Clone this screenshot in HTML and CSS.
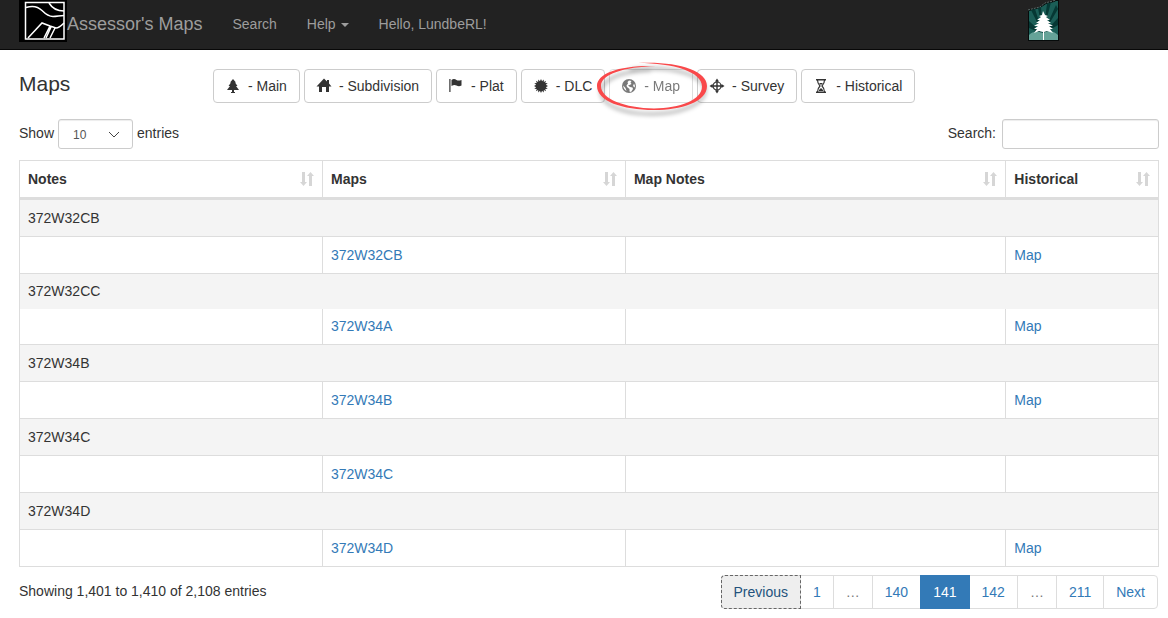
FILE: index.html
```html
<!DOCTYPE html>
<html lang="en">
<head>
    <meta charset="UTF-8">
    <meta name="viewport" content="width=device-width, initial-scale=1.0">
    <title>Assessor's Maps</title>
    <link rel="stylesheet" href="styles.css">
</head>
<body>
    <!-- shared icon for the sortable column headers -->
    <svg class="symbols" aria-hidden="true">
        <symbol id="icon-sort" viewBox="0 0 14 14">
            <path d="M2 0h3v10h2L3.500 14 0 10h2zM9 14V4H7l3.500-4L14 4h-2v10z"/>
        </symbol>
    </svg>

    <nav class="navbar">
        <a class="navbar-brand" href="#">
            <svg class="brand-logo" viewBox="0 0 48 42" aria-hidden="true">
                <rect width="48" height="42" fill="#000"/>
                <g fill="none" stroke="#fff" stroke-width="1.500">
                    <rect x="6.500" y="2.500" width="38.500" height="36.500"/>
                    <path d="M7 7.500c6-2 11-2 16 3 4 4 7 6 11 6 4 0 7-1 11-1"/>
                    <path d="M30 3c3 5 8 8 15 8"/>
                    <path d="M9 38l14-15 8 3 6 2c3 0 5-2 8-5M31 26l-6 12M32 27l-5 11M36 28l-5 10"/>
                </g>
            </svg>
            <span>Assessor's Maps</span>
        </a>
        <ul class="navbar-nav">
            <li><a href="#">Search</a></li>
            <li><a href="#">Help <span class="caret"></span></a></li>
            <li><a href="#">Hello, LundbeRL!</a></li>
        </ul>
        <svg class="tree-logo" viewBox="0 0 31 41" aria-hidden="true">
            <path d="M0 10l12-3 5-4 8-2 3-1h3v41H0z" fill="#060b0b"/>
            <path d="M1 11l11-3 6-4 8-2 2-1h2v39H1z" fill="#1b5e57"/>
            <g fill="#063834">
                <path d="M15 34L3 10l4-1zM15 34L10 8l3-1zM15 34L19 4l4-2zM15 34L28 5l2 4zM15 34L1 21v7zM15 34l15-16v7z"/>
            </g>
            <path d="M1 35c4-4 8-4 14-2 6-3 11-2 15 2v5H1z" fill="#65a398"/>
            <path d="M0 10l12-3 5-4 8-2 3-1" fill="none" stroke="#8aa39f" stroke-width=".6" stroke-dasharray="2 1"/>
            <path d="M15 11l2 4 3 1-2 1 4 3-3 0 4 3-3 0 5 3-4 0 4 3-3 0 3 4-6-2-3 1v8h-1v-8l-4-1-5 2 3-4-3 0 4-3-4 0 5-3-3 0 4-3-3 0 4-3-2-1 3-1z" fill="#fff"/>
        </svg>
    </nav>

    <main class="container">
        <div class="toolbar">
            <h1>Maps</h1>
            <div class="map-types">
                <button type="button" class="btn">
                    <svg class="icon" viewBox="0 0 14 14" aria-hidden="true"><path d="M7 0l3 3.500H9L11.500 7H10l3 4H8v2h1v1H5v-1h1v-2H1l3-4H2.500L5 3.500H4z"/></svg>
                    - Main
                </button>
                <button type="button" class="btn">
                    <svg class="icon" viewBox="0 0 14 14" aria-hidden="true"><path d="M7-.5l3 3V1h2v3.500L14.500 7.500H12V13H9V8H5v5H2V7.500H-.5z"/></svg>
                    - Subdivision
                </button>
                <button type="button" class="btn">
                    <svg class="icon" viewBox="0 0 14 14" aria-hidden="true"><path d="M.3 0h1.200v13H.3zM2.500 1c2-1.500 3.500-1 5 0s3 .6 5 0v5.500c-2 1-3.500.8-5 0s-3-.8-5 .5z"/></svg>
                    - Plat
                </button>
                <button type="button" class="btn">
                    <svg class="icon" viewBox="0 0 14 14" aria-hidden="true"><path d="M7 0l1.100 2.200L9.700.5l.2 2.400 2.200-1.100-.9 2.300 2.500.1-1.900 1.500L14 7l-2.200 1.200 1.900 1.600-2.500.1.900 2.300-2.200-1.100-.2 2.400-1.600-1.700L7 14l-1.100-2.200-1.600 1.700-.2-2.400-2.200 1.100.9-2.300-2.500-.1 1.900-1.600L0 7l2.200-1.300L.3 4.200l2.500-.1-.9-2.300 2.200 1.100.2-2.400 1.600 1.700z"/></svg>
                    - DLC
                </button>
                <div class="marked">
                    <button type="button" class="btn" disabled>
                        <svg class="icon" viewBox="0 0 14 14" aria-hidden="true">
                            <circle cx="7" cy="7" r="7"/>
                            <path d="M7 1.500l2.500.5L8.500 3.500 9.500 5 7.500 6 6 6.500 8 8l2.500.5.5 1.500-2 3-1.500-.5L7.500 10 5 8 4.500 6.500 6 4.500 5.500 3zM1.200 6.500L3.500 9l1 3C2.500 11 1.300 9 1.200 6.500zM12 4.500l1 2.500-.5 1.500L11 7z" fill="#fff"/>
                        </svg>
                        - Map
                    </button>
                    <svg class="ring" viewBox="0 0 116 56" aria-hidden="true">
                        <path class="ring-shadow" d="M34 5C80-1 109 12 109 25c0 15-27 24-53 24C26 49 6 40 5 27 5 15 24 6 55 5"/>
                        <path class="ring-line" d="M44 2C82 0 113 9 113 25 113 41 87 49 60 49 28 49 3 40 3 25 3 12 26 4 62 5 30 6 7 13 7 25c0 13 24 22 53 22.500C86 47 108 39 108 25.500 108 11 80 2 44 2z"/>
                    </svg>
                </div>
                <button type="button" class="btn">
                    <svg class="icon" viewBox="0 0 14 14" aria-hidden="true">
                        <path d="M7-.5l2 3H7.700v9H9l-2 3-2-3h1.300v-9H5zM-.5 7l3-2v1.300h9V5l3 2-3 2V7.700h-9V9z"/>
                        <circle cx="7" cy="7" r="4" fill="none" stroke="currentColor" stroke-width="1.200"/>
                    </svg>
                    - Survey
                </button>
                <button type="button" class="btn">
                    <svg class="icon" viewBox="0 0 14 14" aria-hidden="true">
                        <path d="M2 0h10v1.500H2zM2 12.500h10V14H2zM5 11l2-2 2 2v1H5zM5 4h4L7 6z"/>
                        <path d="M3.500 1c0 3 .5 4 2.500 6-2 2-2.500 3-2.500 6M10.500 1c0 3-.5 4-2.500 6 2 2 2.500 3 2.500 6" fill="none" stroke="currentColor" stroke-width="1.200"/>
                    </svg>
                    - Historical
                </button>
            </div>
        </div>

        <div class="table-controls">
            <div class="length">
                <label for="page-length">Show</label>
                <span class="select-wrap">
                    <select id="page-length">
                        <option>10</option>
                        <option>25</option>
                        <option>50</option>
                        <option>100</option>
                    </select>
                    <svg class="chevron" viewBox="0 0 12 7" aria-hidden="true"><path d="M1 1l5 5 5-5"/></svg>
                </span>
                <label for="page-length">entries</label>
            </div>
            <div class="filter">
                <label for="search">Search:</label>
                <input type="search" id="search">
            </div>
        </div>

        <table class="map-table">
            <colgroup>
                <col class="col-notes">
                <col class="col-maps">
                <col class="col-map-notes">
                <col class="col-historical">
            </colgroup>
            <thead>
                <tr>
                    <th><div class="sortable">Notes <svg class="sort"><use href="#icon-sort"/></svg></div></th>
                    <th><div class="sortable">Maps <svg class="sort"><use href="#icon-sort"/></svg></div></th>
                    <th><div class="sortable">Map Notes <svg class="sort"><use href="#icon-sort"/></svg></div></th>
                    <th><div class="sortable">Historical <svg class="sort"><use href="#icon-sort"/></svg></div></th>
                </tr>
            </thead>
            <tbody>
                <tr class="group"><td colspan="4">372W32CB</td></tr>
                <tr><td></td><td><a href="#">372W32CB</a></td><td></td><td><a href="#">Map</a></td></tr>
                <tr class="group joined"><td colspan="4">372W32CC</td></tr>
                <tr class="compact"><td></td><td><a href="#">372W34A</a></td><td></td><td><a href="#">Map</a></td></tr>
                <tr class="group"><td colspan="4">372W34B</td></tr>
                <tr><td></td><td><a href="#">372W34B</a></td><td></td><td><a href="#">Map</a></td></tr>
                <tr class="group"><td colspan="4">372W34C</td></tr>
                <tr><td></td><td><a href="#">372W34C</a></td><td></td><td></td></tr>
                <tr class="group"><td colspan="4">372W34D</td></tr>
                <tr><td></td><td><a href="#">372W34D</a></td><td></td><td><a href="#">Map</a></td></tr>
            </tbody>
        </table>

        <div class="table-footer">
            <div>Showing 1,401 to 1,410 of 2,108 entries</div>
            <ul class="pagination">
                <li><a class="focused" href="#">Previous</a></li>
                <li><a href="#">1</a></li>
                <li><span>…</span></li>
                <li><a href="#">140</a></li>
                <li><a class="active" href="#">141</a></li>
                <li><a href="#">142</a></li>
                <li><span>…</span></li>
                <li><a href="#">211</a></li>
                <li><a href="#">Next</a></li>
            </ul>
        </div>
    </main>
</body>
</html>
```

FILE: styles.css
```css
* {
    box-sizing: border-box;
}
body {
    margin: 0;
    font-family: "Liberation Sans", Arial, sans-serif;
    font-size: 14px;
    line-height: 20px;
    color: #333;
    background-color: #fff;
}
a {
    color: #337ab7;
    text-decoration: none;
}
.symbols {
    display: none;
}

/* navbar */
.navbar {
    display: flex;
    align-items: flex-start;
    height: 50px;
    padding: 0 109px 0 19px;
    background-color: #222;
    border-bottom: 1px solid #080808;
}
.navbar a {
    color: #9d9d9d;
}
.navbar-brand {
    display: flex;
    padding-right: 15px;
    font-size: 18px;
}
.navbar-brand span {
    padding-top: 14px;
}
.brand-logo {
    width: 48px;
    height: 42px;
}
.navbar-nav {
    display: flex;
    margin: 0;
    padding: 0;
    list-style: none;
}
.navbar-nav a {
    display: block;
    padding: 14px 15px;
}
.caret {
    display: inline-block;
    margin-left: 1px;
    vertical-align: middle;
    border-top: 4px solid;
    border-left: 4px solid transparent;
    border-right: 4px solid transparent;
}
.tree-logo {
    width: 31px;
    height: 41px;
    margin-left: auto;
}

/* page body */
.container {
    padding: 19px 9px 0 19px;
}
.toolbar {
    display: flex;
}
h1 {
    width: 194px;
    margin: 0;
    padding-top: 5px;
    font-size: 21px;
    font-weight: 400;
    line-height: 20px;
}
.map-types {
    display: flex;
    gap: 4px;
}
.btn {
    display: flex;
    align-items: center;
    gap: 8px;
    height: 34px;
    padding: 0 12px;
    font: inherit;
    color: #333;
    white-space: nowrap;
    background-color: #fff;
    border: 1px solid #ccc;
    border-radius: 4px;
    cursor: pointer;
}
.btn:disabled {
    opacity: 0.65;
    cursor: not-allowed;
}
.icon {
    width: 14px;
    height: 14px;
    fill: currentColor;
    overflow: visible;
}
.marked {
    position: relative;
}
.ring {
    position: absolute;
    top: -8px;
    left: -15px;
    z-index: 1;
    width: 116px;
    height: 56px;
    overflow: visible;
    pointer-events: none;
}
.ring-line {
    fill: #f9484a;
}
.ring-shadow {
    fill: none;
    stroke: rgba(0, 0, 0, 0.3);
    stroke-width: 3;
    filter: blur(2px);
    transform: translate(2px, 4px);
}

/* length and search controls */
.table-controls {
    display: flex;
    justify-content: space-between;
    margin: 16px 0 11px;
}
.length {
    display: flex;
    gap: 4px;
}
.filter {
    display: flex;
    gap: 6px;
}
.table-controls label {
    padding-top: 4px;
}
.select-wrap {
    position: relative;
}
.table-controls select,
.table-controls input {
    display: block;
    height: 30px;
    margin: 0;
    font-family: inherit;
    font-size: 12px;
    color: #555;
    background-color: #fff;
    border: 1px solid #ccc;
    border-radius: 3px;
    box-shadow: inset 0 1px 1px rgba(0, 0, 0, 0.075);
    appearance: none;
}
.table-controls select {
    width: 75px;
    padding: 1px 14px 0;
}
.table-controls input {
    width: 157px;
    padding: 5px 10px;
}
.chevron {
    position: absolute;
    top: 12px;
    right: 13px;
    width: 12px;
    height: 7px;
    fill: none;
    stroke: #444;
    pointer-events: none;
}

/* table */
.map-table {
    width: 100%;
    table-layout: fixed;
    border-collapse: separate;
    border-spacing: 0;
    border-top: 1px solid #ddd;
    border-left: 1px solid #ddd;
}
.col-notes,
.col-maps {
    width: 26.6%;
}
.col-map-notes {
    width: 33.4%;
}
.col-historical {
    width: 13.4%;
}
.map-table th,
.map-table td {
    height: 37px;
    padding: 8px;
    text-align: left;
    border-right: 1px solid #ddd;
    border-bottom: 1px solid #ddd;
}
.map-table th {
    border-bottom-width: 3px;
}
.group td {
    background-color: #f4f4f4;
}
.map-table .joined td {
    height: 35px;
    padding: 7px 8px 8px;
    border-bottom: 0;
}
.map-table .compact td {
    height: 36px;
    padding: 7px 8px 8px;
}
.sortable {
    display: flex;
    justify-content: space-between;
    align-items: center;
}
.sort {
    width: 14px;
    height: 14px;
    fill: #d6d6d6;
}

/* info and pagination */
.table-footer {
    display: flex;
    justify-content: space-between;
    padding-top: 8px;
}
.table-footer > div {
    padding-top: 6px;
}
.pagination {
    display: flex;
    margin: 0;
    padding: 0 1px 0 0;
    list-style: none;
}
.pagination a,
.pagination span {
    display: block;
    margin-left: -1px;
    padding: 6px 12px;
    background-color: #fff;
    border: 1px solid #ddd;
}
.pagination span {
    color: #777;
}
.pagination li:first-child a {
    border-radius: 4px 0 0 4px;
}
.pagination li:last-child a {
    border-radius: 0 4px 4px 0;
}
.pagination .focused {
    position: relative;
    color: #23527c;
    background-color: #eee;
    outline: 1px dashed #666;
    outline-offset: -1px;
}
.pagination .active {
    position: relative;
    color: #fff;
    background-color: #337ab7;
    border-color: #337ab7;
}
```
